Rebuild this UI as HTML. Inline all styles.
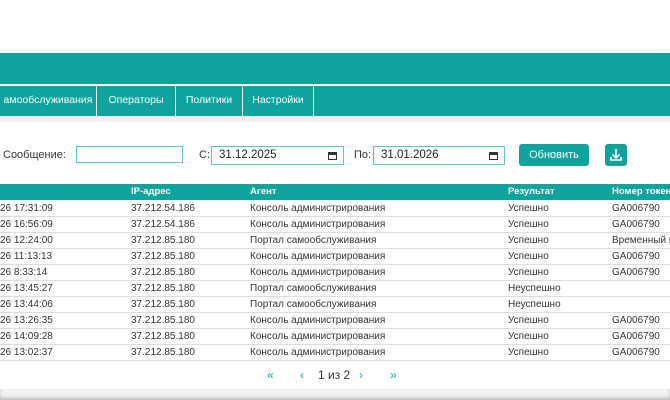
<!DOCTYPE html>
<html><head><meta charset="utf-8"><style>
*{box-sizing:border-box;margin:0;padding:0}
body{width:670px;height:400px;overflow:hidden;background:#fff;font-family:"Liberation Sans",sans-serif;position:relative;color:#333}
.hdr{position:absolute;left:0;top:53px;width:670px;height:31px;background:#0ea39c}
.nav{position:absolute;left:0;top:85px;width:670px;height:31px;background:#0ea39c;border-top:1px solid #fff}
.strip{position:absolute;left:0;top:116px;width:670px;height:6px;background:#f0f0f0}
.nav div{position:absolute;top:0;height:30px;line-height:29px;color:#fff;font-size:10.5px;border-right:1px solid #fff;text-align:center}
.lbl{position:absolute;font-size:11px;color:#333}
.inp{position:absolute;border:1px solid #5cc9c3;height:19px;font-size:11.5px;line-height:17px;padding-left:7px;color:#222}
.cal{position:absolute;right:6px;top:5px;width:9px;height:8px;border:1.5px solid #333;border-top-width:3px}
.btn{position:absolute;left:519px;top:144px;width:70px;height:22px;background:#0ea39c;border-radius:3px;color:#fff;font-size:11px;text-align:center;line-height:22px}
.dl{position:absolute;left:605px;top:144px;width:22px;height:22px;background:#0ea39c;border-radius:3px}
.th{position:absolute;left:0;top:184px;width:670px;height:16px;background:#0ea39c}
.row{position:absolute;left:0;width:670px;height:16px;border-bottom:1px solid #ddd;font-size:10px;line-height:16px}
.row span,.th span{position:absolute;top:0;white-space:nowrap}
.th span{color:#fff;font-weight:bold;font-size:9.5px;line-height:15px}
.c1{left:0}.c2{left:131px}.c3{left:250px}.c4{left:508px}.c5{left:612px}
.pg{position:absolute;top:368px;font-size:12px;color:#0ea39c}
.bot{position:absolute;left:0;top:389px;width:670px;height:11px;background:#f2f2f2;box-shadow:0 -2px 3px #bbb inset}
</style></head><body>
<div class="hdr"></div>
<div class="nav">
<div style="left:0;width:97px">амообслуживания</div>
<div style="left:97px;width:79px">Операторы</div>
<div style="left:176px;width:67px">Политики</div>
<div style="left:243px;width:71px">Настройки</div>
</div>
<div class="strip"></div>
<div class="lbl" style="left:3px;top:149px">Сообщение:</div>
<div class="inp" style="left:76px;top:146px;width:107px;height:17px"></div>
<div class="lbl" style="left:199px;top:149px">С:</div>
<div class="inp" style="left:211px;top:146px;width:133px">31.12.2025<div class="cal"></div></div>
<div class="lbl" style="left:354px;top:149px">По:</div>
<div class="inp" style="left:373px;top:146px;width:132px">31.01.2026<div class="cal"></div></div>
<div class="btn">Обновить</div>
<div class="dl"><svg width="22" height="22" viewBox="0 0 22 22"><path d="M11 5v9M7.5 10.5L11 14l3.5-3.5M6 13v3h10v-3" stroke="#fff" stroke-width="1.6" fill="none"/></svg></div>
<div class="th"><span class="c2">IP-адрес</span><span class="c3">Агент</span><span class="c4">Результат</span><span class="c5">Номер токена</span></div>
<div class="row" style="top:201px"><span class="c1">26 17:31:09</span><span class="c2">37.212.54.186</span><span class="c3">Консоль администрирования</span><span class="c4">Успешно</span><span class="c5">GA006790</span></div>
<div class="row" style="top:217px"><span class="c1">26 16:56:09</span><span class="c2">37.212.54.186</span><span class="c3">Консоль администрирования</span><span class="c4">Успешно</span><span class="c5">GA006790</span></div>
<div class="row" style="top:233px"><span class="c1">26 12:24:00</span><span class="c2">37.212.85.180</span><span class="c3">Портал самообслуживания</span><span class="c4">Успешно</span><span class="c5">Временный ко</span></div>
<div class="row" style="top:249px"><span class="c1">26 11:13:13</span><span class="c2">37.212.85.180</span><span class="c3">Консоль администрирования</span><span class="c4">Успешно</span><span class="c5">GA006790</span></div>
<div class="row" style="top:265px"><span class="c1">26 8:33:14</span><span class="c2">37.212.85.180</span><span class="c3">Консоль администрирования</span><span class="c4">Успешно</span><span class="c5">GA006790</span></div>
<div class="row" style="top:281px"><span class="c1">26 13:45:27</span><span class="c2">37.212.85.180</span><span class="c3">Портал самообслуживания</span><span class="c4">Неуспешно</span></div>
<div class="row" style="top:297px"><span class="c1">26 13:44:06</span><span class="c2">37.212.85.180</span><span class="c3">Портал самообслуживания</span><span class="c4">Неуспешно</span></div>
<div class="row" style="top:313px"><span class="c1">26 13:26:35</span><span class="c2">37.212.85.180</span><span class="c3">Консоль администрирования</span><span class="c4">Успешно</span><span class="c5">GA006790</span></div>
<div class="row" style="top:329px"><span class="c1">26 14:09:28</span><span class="c2">37.212.85.180</span><span class="c3">Консоль администрирования</span><span class="c4">Успешно</span><span class="c5">GA006790</span></div>
<div class="row" style="top:345px"><span class="c1">26 13:02:37</span><span class="c2">37.212.85.180</span><span class="c3">Консоль администрирования</span><span class="c4">Успешно</span><span class="c5">GA006790</span></div>
<div class="pg" style="left:267px">«</div>
<div class="pg" style="left:300px">‹</div>
<div class="pg" style="left:318px;color:#333">1 из 2</div>
<div class="pg" style="left:359px">›</div>
<div class="pg" style="left:390px">»</div>
<div class="bot"></div>
</body></html>
